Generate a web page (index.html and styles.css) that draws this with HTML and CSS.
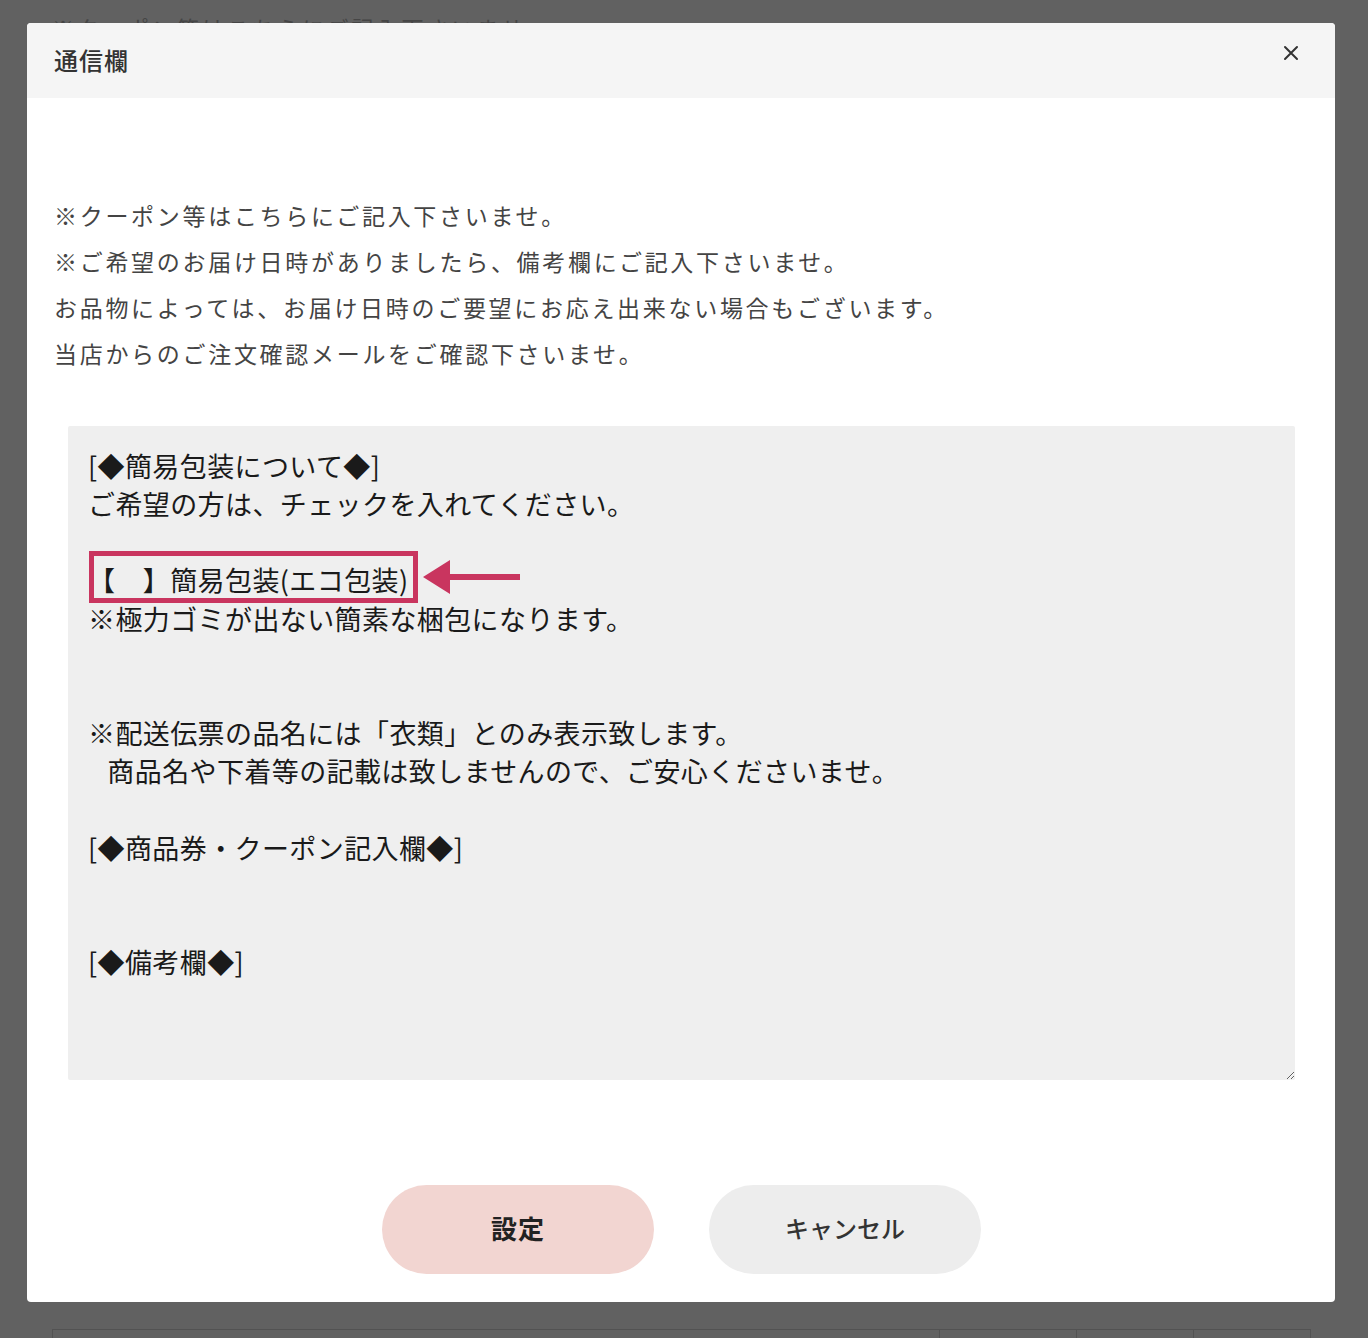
FILE: index.html
```html
<!DOCTYPE html>
<html lang="ja">
<head>
  <meta charset="UTF-8" />
  <meta name="viewport" content="width=device-width, initial-scale=1.0" />
  <title>通信欄</title>
  <link rel="stylesheet" href="styles.css">
</head>
<body>

<!-- page under the dialog -->
<div class="page">
  <p class="page-note">※クーポン等はこちらにご記入下さいませ。</p>
  <div class="page-table">
    <div class="cell wide"></div>
    <div class="cell"></div>
    <div class="cell"></div>
    <div class="cell"></div>
  </div>
</div>

<div class="overlay">
  <div class="modal">
    <div class="modal-header">
      <h2 class="modal-title">通信欄</h2>
      <button class="close" aria-label="閉じる">
        <svg width="16" height="16" viewBox="0 0 16 16">
          <path d="M2 2 L14 14 M14 2 L2 14" stroke="#333" stroke-width="2" stroke-linecap="round" />
        </svg>
      </button>
    </div>

    <div class="modal-body">
      <div class="notes">
        <p>※クーポン等はこちらにご記入下さいませ。</p>
        <p>※ご希望のお届け日時がありましたら、備考欄にご記入下さいませ。</p>
        <p>お品物によっては、お届け日時のご要望にお応え出来ない場合もございます。</p>
        <p>当店からのご注文確認メールをご確認下さいませ。</p>
      </div>

      <div class="memo">
        <textarea class="memo-text" readonly>
[◆簡易包装について◆]
ご希望の方は、チェックを入れてください。

【　】簡易包装(エコ包装)
※極力ゴミが出ない簡素な梱包になります。


※配送伝票の品名には「衣類」とのみ表示致します。
   商品名や下着等の記載は致しませんので、ご安心くださいませ。

[◆商品券・クーポン記入欄◆]


[◆備考欄◆]</textarea>
        <!-- annotation -->
        <div class="mark-box"></div>
        <svg class="mark-arrow" width="98" height="34" viewBox="0 0 98 34">
          <path d="M0 17 L27 0 L27 14 L97 14 L97 20 L27 20 L27 34 Z" fill="#c9355f" />
        </svg>
      </div>

      <div class="actions">
        <button class="btn btn-ok">設定</button>
        <button class="btn btn-cancel">キャンセル</button>
      </div>
    </div>
  </div>
</div>

</body>
</html>
```

FILE: styles.css
```css
body {
  margin: 0;
  background: #ffffff;
  font-family: "Noto Sans CJK JP", "Noto Sans", sans-serif;
  color: #333;
}

.page {
  padding: 14px 52px 0 52px;
}

.page-note {
  margin: 0;
  font-size: 22px;
  line-height: 26px;
  letter-spacing: 3px;
  color: #b5b5b5;
}

.page-table {
  display: flex;
  margin-top: 1289px;
  margin-right: 5px;
  height: 40px;
  border: 1px solid #d8d8d8;
}

.cell {
  width: 116px;
  border-left: 1px solid #d8d8d8;
}

.cell.wide {
  flex: 1;
  border-left: none;
}

.cell:nth-child(2) {
  width: 136px;
}

.overlay {
  position: fixed;
  inset: 0;
  background: rgba(0, 0, 0, 0.62);
  padding: 23px 33px 0 27px;
}

.modal {
  background: #ffffff;
  border-radius: 4px;
  overflow: hidden;
}

.modal-header {
  display: flex;
  align-items: center;
  justify-content: space-between;
  height: 75px;
  padding: 0 36px 0 27px;
  background: #f5f5f5;
}

.modal-title {
  margin: 0 0 2px;
  font-size: 24px;
  font-weight: 500;
  letter-spacing: 1px;
  color: #333;
}

.close {
  border: none;
  background: none;
  padding: 0;
  margin-top: -15px;
  width: 16px;
  height: 16px;
  cursor: pointer;
}

.close svg {
  display: block;
}

.modal-body {
  padding: 94px 40px 28px 27px;
}

.notes p {
  margin: 0;
  font-size: 23px;
  line-height: 46px;
  letter-spacing: 2.7px;
  color: #444;
}

.memo {
  position: relative;
  margin: 50px 0 0 14px;
}

.memo-text {
  display: block;
  box-sizing: border-box;
  width: 100%;
  height: 654px;
  margin: 0;
  padding: 21px 20px;
  border: none;
  border-radius: 2px;
  outline: none;
  background: #efefef;
  font-family: "Noto Sans CJK JP", "Noto Sans", sans-serif;
  font-size: 27px;
  line-height: 38.15px;
  letter-spacing: 0.4px;
  color: #1a1a1a;
  resize: vertical;
}

.mark-box {
  position: absolute;
  left: 21px;
  top: 125px;
  width: 319px;
  height: 42px;
  border: 5px solid #c9355f;
}

.mark-arrow {
  position: absolute;
  left: 355px;
  top: 134px;
}

.actions {
  display: flex;
  justify-content: center;
  gap: 55px;
  margin-top: 105px;
  padding-left: 14px;
}

.btn {
  width: 272px;
  height: 89px;
  padding: 0 0 4px;
  border: none;
  border-radius: 45px;
  font-family: "Noto Sans CJK JP", "Noto Sans", sans-serif;
  font-size: 26px;
  font-weight: bold;
  letter-spacing: 1px;
  color: #222;
  cursor: pointer;
}

.btn-ok {
  background: #f2d5d1;
}

.btn-cancel {
  background: #ededed;
  color: #333;
  font-size: 24px;
  font-weight: 500;
  letter-spacing: 0;
}
```
